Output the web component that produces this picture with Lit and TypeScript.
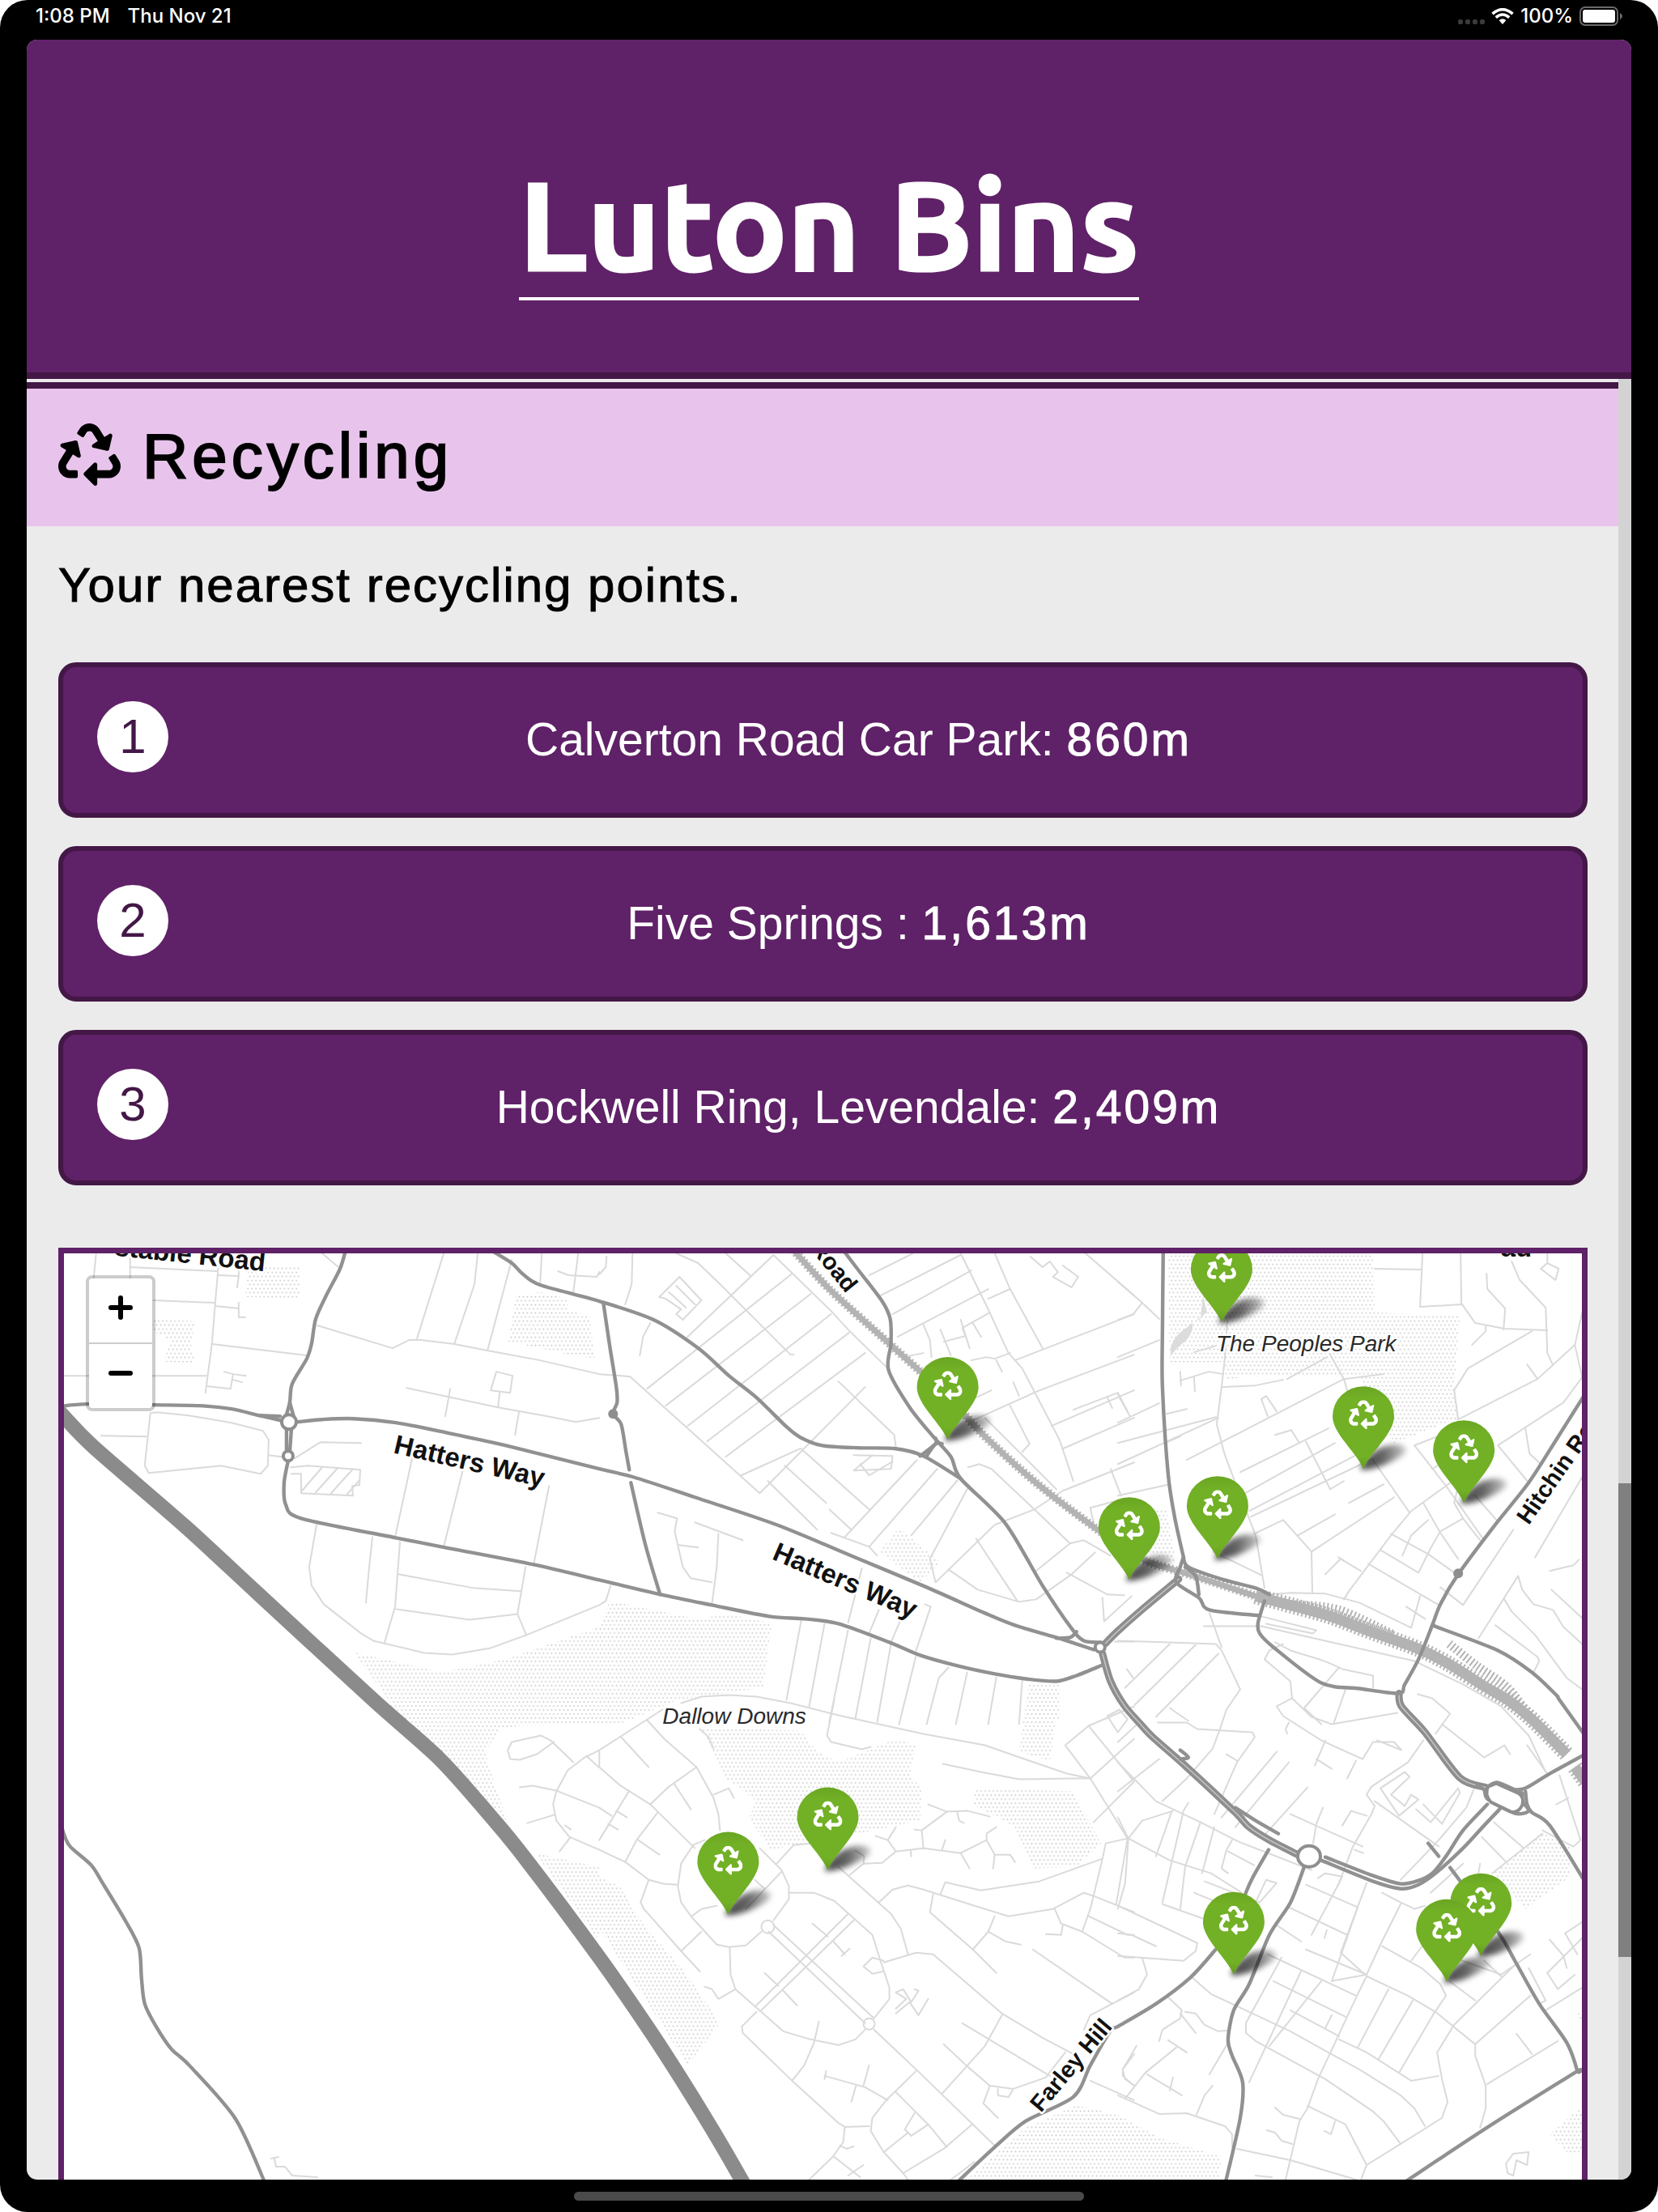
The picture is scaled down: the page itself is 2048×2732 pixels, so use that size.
import { LitElement, html, svg, css } from "lit";
import { customElement, property } from "lit/decorators.js";

const RECYCLE =
  "M184.561 261.903c3.232 13.997-12.123 24.635-24.068 17.168l-40.736-25.455-50.867 81.402C55.606 356.273 70.96 384 96.012 384H148c6.627 0 12 5.373 12 12v40c0 6.627-5.373 12-12 12H96.115c-75.334 0-121.302-83.048-81.408-146.88l50.822-81.388-40.725-25.448c-12.081-7.547-8.966-25.961 4.879-29.158l110.237-25.45c8.611-1.988 17.201 3.381 19.189 11.99l25.452 110.237zm98.561-182.915l41.289 66.076-40.74 25.457c-12.051 7.528-9 25.953 4.879 29.158l110.237 25.45c8.672 1.999 17.215-3.438 19.189-11.99l25.45-110.237c3.197-13.844-11.99-24.719-24.068-17.168l-40.687 25.424-41.263-66.082c-37.521-60.033-125.209-60.171-162.816 0l-17.963 28.766c-3.51 5.62-1.8 13.021 3.82 16.533l33.919 21.195c5.62 3.512 13.024 1.803 16.536-3.817l17.961-28.743c12.712-20.341 41.973-19.676 54.257-.022zM497.288 301.12l-27.515-44.065c-3.511-5.623-10.916-7.334-16.538-3.821l-33.861 21.159c-5.62 3.512-7.33 10.915-3.818 16.536l27.564 44.112c13.257 21.211-2.057 48.96-27.136 48.96H320V336.02c0-14.213-17.242-21.383-27.313-11.313l-80 79.981c-6.249 6.248-6.249 16.379 0 22.627l80 79.989C302.689 517.308 320 510.3 320 495.989V448h95.88c75.274 0 121.335-82.997 81.408-146.88z";

type Point = [number, number];

// Survey sheets: origin and scale of each sheet on the map canvas.
const SHEETS: Record<string, [number, number, number, number]> = {
  a: [60, 1530, 0.4337, 0.3827],
  b: [740, 1530, 0.4209, 0.3827],
  c: [1380, 1530, 0.426, 0.3827],
  d: [0, 2100, 0.4719, 0.4031],
  e: [740, 2100, 0.4209, 0.4031],
  f: [1380, 2100, 0.426, 0.4031],
};

// "a: x,y x,y b: x,y" - a letter switches the sheet that the following points are on.
function points(line: string): Point[] {
  let sheet = SHEETS.a;
  const out: Point[] = [];
  for (const token of line.trim().split(/\s+/)) {
    if (token.endsWith(":")) {
      sheet = SHEETS[token[0]];
      continue;
    }
    const [x, y] = token.split(",").map(Number);
    out.push([
      Math.round(sheet[0] + x * sheet[2]),
      Math.round(sheet[1] + y * sheet[3]),
    ]);
  }
  return out;
}

const straight = (line: string) =>
  "M" + points(line).map((p) => p.join(" ")).join("L");

function smooth(line: string): string {
  const p = points(line);
  let d = `M${p[0][0]} ${p[0][1]}`;
  for (let i = 0; i < p.length - 1; i++) {
    const a = p[i - 1] ?? p[i];
    const b = p[i];
    const c = p[i + 1];
    const e = p[i + 2] ?? c;
    const k = 7;
    d += `C${b[0] + (c[0] - a[0]) / k} ${b[1] + (c[1] - a[1]) / k} ${c[0] - (e[0] - b[0]) / k} ${c[1] - (e[1] - b[1]) / k} ${c[0]} ${c[1]}`;
  }
  return d;
}

const MOTORWAY =
  "a: 20,545 44,575 130,675 390,930 600,1150 d: 976,0 1150,182 1275,345 1366,475 e: 0,790 160,1030 300,1260 420,1475 450,1540";

const MAJOR = [
  "a: 30,543 110,535 300,537 430,540 520,552 600,572 660,588",
  "a: 600,572 660,575",
  "a: 710,592 780,586 870,582 990,595 1130,628 1300,668 b: 0,744 100,770 280,835 520,925 760,1035 960,1125 1130,1210 1220,1250 1340,1288 1450,1328",
  "b: 1340,1290 1380,1288 1400,1270",
  "a: 846,40 830,100 790,185 760,260 750,340 735,390 695,470 687,530 676,578",
  "a: 687,530 698,578",
  "a: 678,616 678,690",
  "a: 692,616 688,690",
  "a: 682,718 672,790 675,860 720,905 990,967 1130,998 1380,1052 b: 0,1102 180,1150 330,1185 500,1220 600,1227 700,1245 850,1305 940,1345 1050,1380 1160,1405 1250,1422 1340,1430 1400,1412 1475,1378",
  "a: 1260,40 1320,80 1350,115 1400,152 b: 0,205 160,265 290,355 380,445 460,515 550,610 590,643 650,670 760,676 870,680 950,702 1060,775",
  "b: 12,210 30,350 50,480 52,530 40,568 65,600 78,690 87,748",
  "b: 92,790 135,990 178,1150",
  "b: 715,40 760,105 830,205 852,260 855,340 847,425 910,545 980,640 1030,705 1060,775 1190,920 1300,1120 1385,1260 1420,1298 1470,1305",
  "b: 940,702 985,665 985,645",
  "b: 960,702 985,665 1005,665",
  "c: 132,30 130,300 128,480 145,760 165,900 190,1030",
  "c: 190,1030 180,1060 170,1110 235,1160 265,1200 410,1218",
  "c: 195,1060 225,1090 235,1150",
  "c: 190,1030 205,1062 300,1100 400,1130 440,1150",
  "c: 425,1170 405,1240 410,1275 450,1320 590,1435 700,1452 815,1468 830,1440 870,1360 910,1250 935,1180 985,1085 1090,930 1190,790 1270,650 1350,510",
  "c: 910,1250 1100,1330 1200,1400 1270,1475 f: 1280,0 1350,105",
  "f: 1070,270 1075,262 1100,252 1150,275 1172,285 1172,310 1190,340 1150,348 1072,305 1062,275 1040,262",
  "f: 1140,275 1180,270 1250,225 1350,168",
  "f: 1180,280 1185,320 1200,345 1250,385 1350,550",
  "f: 1070,320 1000,400 950,480 910,530 870,552 820,562 740,538 600,482",
  "f: 1110,330 1060,385 1000,455 920,530 870,565 820,578 740,555 590,492",
  "f: 340,330 400,370 465,410",
  "f: 180,155 205,175 180,182",
  "f: 437,460 390,545 370,590 330,700 280,770 210,850 110,930 0,1000 e: 1500,1012 1440,1120 1390,1215 1250,1290 1160,1370 1050,1475",
  "f: 540,510 500,620 440,720 380,870 335,950 320,1040 330,1090 362,1170 355,1280 313,1475",
  "f: 898,440 930,480",
  "f: 963,513 1100,710 1150,800 1220,930 1300,1050 1330,1135 1325,1140 1080,1302 830,1475",
  "d: 160,380 167,410 185,450 240,505 270,560 330,680 365,760 370,850 380,930 410,1000 450,1070 495,1120 617,1282 692,1475",
];

const DUAL = [
  "c: 175,1100 80,1190 0,1268 b: 1482,1308",
  "b: 1475,1340 1500,1430 1540,1508 f: 65,74 100,115 200,205 340,345 380,390 440,430 520,475",
  "c: 815,1468 822,1510 f: 890,100 990,238 1065,268",
];

const RAIL = [
  "b: 560,30 680,170 860,350 1020,510 1130,640 1280,790 1460,940 1560,1010 c: 90,1045 220,1090 400,1155",
];
const RAIL_WIDE = [
  "c: 400,1155 600,1215 720,1265 870,1325 960,1375 1060,1445 f: 1130,0 1200,60 1300,165",
  "f: 1325,205 1355,250",
];
const RAIL_YARD = [
  "c: 960,1310 1040,1380 1130,1450 f: 1200,60",
  "c: 500,1180 640,1200 800,1280",
];

const MINOR = [
  // north west
  "a: 135,50 130,130", "a: 232,50 232,130", "a: 232,93 480,108", "a: 485,90 475,210 465,340 455,440 447,500",
  "a: 483,120 542,123 537,160", "a: 542,90 542,123", "a: 300,200 475,210", "a: 475,220 542,227 542,257 560,257", "a: 542,210 542,230",
  "a: 465,343 735,378", "a: 44,443 450,445", "a: 455,478 518,485 525,440 500,432", "a: 525,438 562,444", "a: 525,458 550,464",
  "a: 150,638 278,640", "a: 290,565 275,735 285,757 490,735 605,760 625,735 627,650 610,622 520,595 400,572 310,562 290,565",
  "a: 627,700 665,706", "a: 700,712 775,658 890,661", "a: 780,50 825,95",
  "a: 690,740 740,735 888,747 886,797 865,800 866,830 720,824 720,760 692,760",
  "a: 722,815 780,740", "a: 760,820 822,742", "a: 805,824 868,745", "a: 850,826 885,780",
  "a: 765,282 980,356 1025,328 1060,328 1155,343 1250,363 1400,395 1568,440 b: 0,440 90,447 470,822 780,480",
  "a: 1125,50 1050,325", "a: 1223,50 1213,150 1155,343", "a: 1318,70 1250,363", "a: 1405,50 1400,150", "a: 1507,50 1495,175", "a: 1450,108 1480,120 1560,125 1568,110",
  "a: 1018,484 1140,513 1280,545 1420,575 1500,592 1568,580", "a: 1143,487 1130,575", "a: 1275,432 1322,445 1315,500 1260,492 1275,432", "a: 1285,500 1280,545", "a: 1340,560 1327,635",
  "a: 1035,712 988,965", "a: 1180,745 1125,995", "a: 1425,800 1382,1052",
  "a: 763,925 743,1060 750,1120 785,1180 890,1275 925,1298 1070,1337 1150,1342 1260,1322 1360,1280 1568,1185 b: 20,1170 33,1120",
  "a: 923,965 912,1060 905,1175", "a: 1000,980 988,1190 957,1305", "a: 996,1085 1210,1130 1345,1140", "a: 990,1198 1200,1232 1335,1213", "a: 1357,1060 1335,1213 1360,1280",
  // north centre
  "b: 22,60 20,95 0,118", "b: 98,50 95,150 75,215", "b: 150,275 128,320 118,380",
  "b: 225,50 290,80 350,145 560,375", "b: 370,50 445,122", "b: 510,55 260,320", "b: 510,55 680,235 735,300 845,420",
  "b: 565,115 140,485", "b: 620,180 195,540", "b: 680,245 258,605", "b: 732,305 315,655", "b: 780,370 370,705", "b: 560,375 570,375", "b: 590,680 415,765",
  "b: 700,462 865,635 870,675", "b: 495,785 640,940", "b: 545,735 665,855", "b: 675,875 740,940", "b: 592,680 790,875",
  "b: 932,715 720,965", "b: 990,745 790,995", "b: 1050,780 915,960", "b: 1078,810 970,1035 985,1110 1160,925 1275,875 1360,815 1568,725",
  "b: 680,952 790,995 815,1025", "b: 1080,740 1115,728 1150,745 1275,875 1380,985 1420,975 1500,1025", "b: 1025,1070 1110,1135 1230,1172 1280,1165 1385,1085 1455,1015", "b: 1105,970 1225,1170", "b: 1370,1080 1490,1150 1540,1152", "b: 1280,1075 1380,985",
  "b: 172,885 228,905 220,945 245,1060 268,1098 330,1110", "b: 232,990 290,998", "b: 280,918 420,975", "b: 350,955 345,1060 330,1180",
  "b: 770,1065 730,1240", "b: 820,1200 790,1275", "b: 885,1230 855,1305", "b: 955,1180 972,1190 930,1330",
  "b: 592,1235 548,1490", "b: 660,1245 615,1510", "b: 730,1265 675,1560", "b: 795,1290 750,1550", "b: 855,1310 815,1560", "b: 930,1345 880,1568", "b: 1025,1385 995,1420 960,1568", "b: 1078,1400 1045,1568", "b: 1165,1415 1140,1568", "b: 1240,1425 1230,1568",
  "b: 240,1500 300,1480 380,1475 460,1480 560,1500 700,1540 e: 700,48 950,103 1130,140 1220,170 1370,225 1440,240",
  "b: 175,190 235,125 300,200 245,265 225,245 240,230 195,195 175,190", "b: 205,175 255,225", "b: 225,155 280,215",
  "b: 745,700 860,703 855,745 745,750 800,700", "b: 765,730 790,765 860,720",
  "b: 790,120 920,50", "b: 825,185 1060,55", "b: 860,245 1090,105", "b: 875,318 1140,165", "b: 890,385 950,370", "b: 1060,50 1140,230 1200,370 1240,420 1350,650 1390,785",
  "b: 1160,50 1205,165 1300,355", "b: 1140,195 1205,165", "b: 1220,395 1568,245", "b: 1285,495 1568,375", "b: 1090,590 1285,495", "b: 950,280 970,330 975,385", "b: 1000,295 1030,380", "b: 1060,265 1085,355", "b: 1010,335 1075,315 1065,290 1145,240", "b: 1095,275 1118,320",
  "b: 1090,395 1135,383 1160,390 1205,370", "b: 1165,395 1180,430", "b: 1105,515 1150,490", "b: 1215,465 1230,510", "b: 1205,540 1262,665 1240,690", "b: 1130,580 1340,810",
  "b: 1390,555 1520,500 1550,560", "b: 1490,515 1505,550", "b: 1325,605 1568,490", "b: 1360,680 1568,580", "b: 1500,745 1530,830", "b: 1440,870 1510,850", "b: 1440,870 1450,920",
  "b: 1265,60 1300,95 1320,75 1345,110 1330,125 1385,160 1405,125 1360,90", "b: 1425,50 1568,185", "b: 1475,1160 1480,1235 1560,1155", "b: 1510,1300 1568,1300",
  // north east
  "c: 0,140 70,210 120,262", "c: 0,265 45,245 70,210", "c: 0,385 120,330", "c: 0,505 35,575", "c: 0,595 120,532", "c: 0,660 285,578", "c: 0,730 290,580", "c: 0,830 150,795",
  "c: 140,567 200,552", "c: 135,660 180,640", "c: 180,460 262,432 305,440", "c: 180,432 182,475", "c: 220,450 223,495", "c: 220,368 285,348",
  "c: 318,270 310,390 300,480 287,600 310,700 355,830 400,960 425,1130", "c: 303,480 400,475 480,457", "c: 490,455 605,385", "c: 200,715 655,455 665,490", "c: 615,375 655,455 770,440", "c: 415,520 430,510 460,560", "c: 415,520 435,575",
  "c: 455,635 503,618 525,660", "c: 355,755 610,615", "c: 545,655 615,810 655,785", "c: 365,825 630,660", "c: 380,880 690,700", "c: 385,900 720,720 740,710", "c: 395,955 480,910 560,1010 563,1145", "c: 520,960 630,890", "c: 560,1010 800,835", "c: 668,855 770,795", "c: 740,715 845,885", "c: 860,670 950,800 1060,975", "c: 860,670 925,640", "c: 910,745 950,715",
  "c: 985,800 975,855 1000,905 1050,975", "c: 655,1165 670,1140 790,960 850,880 985,770", "c: 885,855 935,950 985,1035", "c: 790,955 900,1020 975,1080", "c: 760,1005 870,1080 905,1000 935,945 1000,905", "c: 725,1050 930,1185", "c: 825,1025 850,960 900,910", "c: 1035,830 1100,915",
  "c: 440,1150 500,1145 600,1147 700,1175 850,1258 875,1155", "c: 835,1190 890,1228", "c: 935,1125 1000,1185 1145,940", "c: 602,1085 645,1035 705,1075", "c: 638,1030 655,1040", "c: 275,1010 415,1088",
  "c: 745,100 880,102", "c: 882,50 875,222 998,215 1035,275 1120,293 1245,298", "c: 993,50 995,215", "c: 1067,115 1070,165 1123,228 1118,295", "c: 1140,75 1165,135 1240,225 1245,370 1260,410", "c: 1245,50 1245,80 1225,98 1268,135 1278,98 1245,80", "c: 1025,345 1065,300 1065,285",
  "c: 985,585 975,490 1015,420 1200,300", "c: 985,585 1215,455 1325,345 1345,240", "c: 1185,408 1215,455", "c: 1325,345 1345,450 1290,530 1100,670 1190,790", "c: 1180,615 1193,695 1225,730", "c: 1345,770 1210,1030", "c: 1250,1073 1320,1055 1335,1038", "c: 1045,1290 1160,1090 1172,1135 1205,1180 1260,1200 1290,1255 1345,1310", "c: 1255,1135 1345,1225", "c: 1120,1165 1140,1205 1210,1280 1300,1420 1345,1455", "c: 1095,1248 1215,1350 1220,1365 1205,1400",
  "c: 248,1252 415,1252 640,1310 860,1365 1000,1440 1110,1510 f: 1190,110 1240,220", "c: 415,1220 575,1265 565,1275 430,1245", "c: 0,1298 150,1303 285,1308 300,1330 355,1455 315,1520 f: 295,90 275,150 200,240 130,310", "c: 265,1210 300,1320", "c: 455,1305 500,1330 585,1360 620,1375 650,1390 740,1412 740,1450",
  "c: 480,1310 440,1330 425,1360 500,1430 505,1485 460,1510 f: 480,50 590,125 710,180 740,130 800,130 822,155 750,125",
  "c: 640,1385 540,1515 590,1568", "c: 660,1455 625,1568", "c: 505,1485 560,1545 620,1568 810,1530", "c: 150,1310 20,1450", "c: 225,1312 50,1505", "c: 290,1340 110,1545", "c: 25,1390 45,1420", "c: 868,1470 910,1485 962,1535 920,1600", "c: 150,1515 205,1558",
  // east town
  "f: 115,70 200,70 230,90 390,98 397,115 345,190 280,350", "f: 0,130 60,70", "f: 0,190 110,310 240,375 350,435 560,520", "f: 0,280 120,180", "f: 0,360 30,425 150,490 270,530 360,590", "f: 30,425 20,560 0,640", "f: 30,425 70,370 160,340", "f: 155,345 110,480", "f: 205,315 190,340 130,620", "f: 240,375 195,510 180,640", "f: 280,390 245,530", "f: 315,165 345,185", "f: 460,160 300,360", "f: 495,190 340,390", "f: 550,268 420,420",
  "f: 495,70 485,90 490,105", "f: 600,125 570,200", "f: 575,180 620,212", "f: 690,185 665,240", "f: 885,125 840,190 735,265 720,290 745,325 735,350 680,450 640,560 560,720", "f: 745,310 930,450", "f: 650,385 675,340 720,355", "f: 595,330 575,380 565,440", "f: 500,350 710,450", "f: 685,458 712,470",
  "f: 760,270 830,220 845,235 790,290 830,325 850,290 870,305 815,355 760,270", "f: 865,335 905,375 985,270 990,285 940,380 885,320", "f: 940,75 1060,175 1120,140 1135,165", "f: 1030,275 1010,330 930,430 820,550", "f: 1185,140 1245,225", "f: 1270,320 1305,300", "f: 1280,230 1340,430 1320,450 1230,400", "f: 1230,410 1085,530", "f: 1055,420 1125,495", "f: 1090,375 1175,455", "f: 905,590 1000,500", "f: 1045,530 1050,500",
  "f: 580,545 600,530 650,540 635,570", "f: 545,565 695,635", "f: 495,635 665,720", "f: 720,560 645,775 715,840", "f: 460,690 530,740", "f: 545,765 720,840 620,860", "f: 605,705 598,730", "f: 435,780 690,905", "f: 450,860 660,970", "f: 500,950 640,1030", "f: 475,790 370,990 370,1020 400,1045", "f: 530,830 380,1170", "f: 590,860 440,1060", "f: 620,965 600,1005", "f: 720,845 695,900 580,1160 550,1250 525,1290 485,1468", "f: 695,635 620,860", "f: 820,625 760,750 720,840", "f: 765,590 820,620 860,640 890,630",
  "f: 765,755 880,820 935,870 950,905 915,960", "f: 720,845 840,905 920,955 1035,1055", "f: 785,885 695,1065", "f: 855,920 755,1100", "f: 915,960 815,1140", "f: 900,730 850,800", "f: 935,775 1110,840 1195,780", "f: 1150,810 975,995 925,1080 940,1160 955,1230 940,1280 820,1360 720,1425 705,1468", "f: 1195,905 1035,1055 1035,1090 1065,1180 1065,1250 1050,1310", "f: 1275,1045 1070,1175", "f: 1155,1022 1200,1085", "f: 1345,880 1240,950", "f: 960,860 1035,920", "f: 1060,800 1110,845",
  "f: 215,850 270,900 340,935 500,1015 600,1075 700,1130 820,1210 860,1250 890,1305", "f: 400,1045 600,1160 740,1260 770,1290 820,1360", "f: 640,1040 720,1080 850,1165 930,1152", "f: 345,1375 500,1410 690,1468", "f: 550,1242 660,1300 720,1425", "f: 455,1248 480,1270 525,1282", "f: 432,1318 455,1325 475,1350 505,1360", "f: 598,1320 618,1330 628,1290", "f: 400,1455 445,1460",
  "f: 0,1210 120,1268 200,1265 310,1305 330,1330 330,1370", "f: 145,910 185,950 180,975 130,1010 120,1045", "f: 180,960 200,985 225,1020", "f: 195,955 225,960 250,995 290,1015 320,1012", "f: 55,1060 15,1130 20,1160 45,1178", "f: 85,1145 185,1210", "f: 20,1220 80,1140 170,1065", "f: 145,1042 200,1078", "f: 160,1155 150,1195", "f: 320,1050 265,1145", "f: 228,1270 250,1210 275,1180", "f: 0,630 100,680 230,745 225,770 190,800 0,785", "f: 0,715 40,720 110,755", "f: 70,790 85,840 60,885 0,920", "f: 250,555 410,620", "f: 220,590 380,660", "f: 130,625 300,690", "f: 410,620 460,560 430,550 400,620",
  "f: 330,430 315,460 300,515 320,530", "f: 320,465 395,505", "f: 1250,735 1290,785 1300,820", "f: 1190,820 1240,920 1220,930", "f: 1245,835 1345,730", "f: 1245,835 1275,885 1325,840", "f: 1295,715 1345,680", "f: 1295,715 1330,780", "f: 1125,1420 1145,1390 1190,1385 1185,1425 1155,1410 1145,1455 1130,1450 1125,1420",
  // south centre
  "e: 185,30 0,155 0,205 60,260 150,320 280,455", "e: 65,115 145,205", "e: 140,62 190,120 285,205 335,300 350,350 355,400", "e: 285,205 205,265 150,320", "e: 218,255 268,335", "e: 335,290 380,270 395,300", "e: 88,278 0,430", "e: 170,345 110,430 75,495", "e: 115,430 175,475", "e: 0,460 75,495 145,550 190,563 230,565", "e: 50,340 80,360", "e: 25,380 55,398", "e: 0,330 35,355", "e: 295,90 320,115 335,150",
  "e: 145,550 122,620 130,640 240,770 295,832", "e: 240,770 300,710", "e: 310,430 275,445 240,500 230,570 240,620 270,665 345,750 380,757 430,752 475,710", "e: 470,455 535,520 557,570 555,610 510,675", "e: 520,500 570,445 620,438", "e: 535,525 430,640", "e: 455,550 485,578", "e: 270,662 300,640 345,630",
  "e: 557,590 630,590 690,615 800,720 825,800 850,880 850,915 805,975", "e: 510,690 805,975", "e: 497,710 780,990", "e: 745,675 475,950", "e: 730,655 462,935", "e: 625,685 670,725", "e: 685,738 720,778", "e: 710,785 735,762", "e: 485,835 525,875", "e: 540,890 580,935", "e: 383,757 385,840 400,885 540,1015 620,1040 700,1057 750,1040 780,1010", "e: 310,878 330,885 350,915 400,885", "e: 460,955 418,1000 420,1020 565,1165 700,1295 720,1308 790,1305", "e: 645,985 630,1050 600,1120 565,1165", "e: 835,800 800,788 775,815 800,838 835,830", "e: 835,805 930,775 980,778 1180,960 1300,1035 1390,1085", "e: 905,780 885,700 855,655 700,510", "e: 735,535 775,500 830,498 870,465 950,455 1060,468 1135,428 1160,475 1205,475 1218,495", "e: 775,500 778,480 750,462", "e: 820,620 860,580 905,567 950,580 1100,630 1200,663 1330,640 1420,590 1450,600 1568,650", "e: 1000,595 1015,558 1120,582 1290,555 1475,485",
  "e: 870,465 845,430 870,390", "e: 845,430 810,418", "e: 950,455 945,400 1020,342 965,320", "e: 1020,342 1080,340 1145,358", "e: 1050,345 1055,370 1070,378", "e: 1015,430 1005,460", "e: 1060,468 1085,515", "e: 1135,428 1135,410 1165,390", "e: 1160,475 1155,515", "e: 912,460 915,480", "e: 945,400 925,397",
  "e: 690,0 668,110 680,130 770,152 795,145", "e: 1008,197 1120,222 1230,243 1380,240 1440,240 1568,120", "e: 1435,80 1365,140 1440,240 1550,425 1485,440 1475,485 1440,640 1415,710", "e: 1568,20 1435,80 1568,250 1450,375", "e: 1550,425 1515,625", "e: 1335,640 1355,685 1415,710 1540,790 1568,788", "e: 1360,690 1355,720 1310,718", "e: 1435,662 1550,720 1568,720", "e: 980,595 970,650 1095,765 1165,835", "e: 1160,663 1140,710 1095,765", "e: 1140,710 1190,740 1235,748",
  "e: 1270,765 1505,930 1568,895", "e: 1505,930 1440,965 1420,1010", "e: 805,1010 930,1130 1160,1365", "e: 1180,965 1130,1060 1005,1205", "e: 1065,990 1320,1150", "e: 1010,1055 1080,1125 1145,1180 1215,1190 1310,1155 1365,1080", "e: 1145,1180 1125,1235 1170,1280", "e: 1168,1190 1170,1210 1200,1215 1212,1195",
  "e: 930,1135 840,1225 800,1280 795,1320 835,1385 890,1450", "e: 660,1150 780,1185 845,1225", "e: 665,1135 660,1160", "e: 792,1120 775,1180", "e: 752,1180 738,1230", "e: 870,1200 965,1300 1020,1370", "e: 965,1300 915,1335 895,1315 925,1265", "e: 835,1385 905,1325", "e: 1095,1298 1010,1375 890,1450 905,1468", "e: 720,1308 715,1355 685,1400 615,1468", "e: 705,1365 725,1375 745,1368", "e: 690,1400 765,1460", "e: 775,1425 730,1455", "e: 1030,1468 1100,1415",
  "e: 870,945 900,915 870,895 890,885 915,925 935,890 925,885", "e: 870,960 910,925 935,965 965,915", "e: 1440,1165 1568,1225", "e: 1568,1085 1535,1130 1535,1150 1568,1180", "e: 1490,50 1525,30 1550,60 1520,100 1490,50",
  // south west
  "d: 1500,190 1440,125 1415,108 1340,130 1328,155 1335,180 1360,183 1405,165 1450,128", "d: 1568,155 1530,175 1485,215 1455,280 1447,320 1455,370 1490,420 1568,460", "d: 1360,268 1395,262 1455,278 1568,330", "d: 1380,378 1450,352", "d: 1465,465 1492,422", "d: 1480,385 1495,398", "d: 1535,172 1565,205", "d: 710,1405 730,1400", "d: 718,1405 722,1430 745,1428 765,1455 830,1460",
];

const PARKS = [
  "a: 570,95 715,95 715,195 560,190",
  "a: 298,260 420,270 405,340 418,405 330,400 345,330 298,300",
  "a: 1330,185 1400,175 1475,195 1480,235 1540,250 1555,390 1460,370 1310,335",
  "a: 870,1335 1120,1400 1300,1360 1568,1255 b: 30,1170 300,1230 360,1210 505,1240 480,1450 230,1490 60,1568 d: 1360,80 1310,90 1270,160 1300,280 1335,385 1200,210 1010,0 a: 1020,1568",
  "b: 880,935 1000,1045 940,1110 820,1010",
  "b: 1260,1440 1350,1440 1350,1568 e: 1340,50 1320,185 1230,160",
  "c: 145,50 740,50 745,240 990,250 975,480 990,580 800,660 700,450 400,440 310,460 310,400 150,410",
  "c: 60,860 140,880 170,1050 60,1000",
  "e: 300,85 590,95 640,160 700,190 870,120 930,140 910,230 945,270 940,370 760,410 500,460 440,360 460,310 370,240",
  "e: 1105,270 1390,280 1470,440 1400,510 1270,515 1220,390 1095,320",
  "e: 0,540 60,570 130,690 250,830 355,990 260,1120 150,940 0,700",
  "e: 1400,1240 1520,1270 f: 120,1340 300,1400 290,1475 e: 1070,1475 1250,1310",
  "f: 1230,405 1310,450 1310,540 1180,640 1090,530",
  "f: 1330,1255 1350,1250 1350,1390 1300,1385 1250,1330",
  "d: 1400,470 1568,510 1568,740",
  "f: 1325,960 1350,960 1350,1010",
];

const MARKERS: Point[] = [
  [1508, 1634],
  [1170, 1779],
  [1683, 1815],
  [1807, 1857],
  [1503, 1926],
  [1394, 1952],
  [1022, 2310],
  [899, 2365],
  [1828, 2416],
  [1523, 2439],
  [1786, 2448],
];

@customElement("recycle-map")
export class RecycleMap extends LitElement {
  static styles = css`
    :host {
      display: block;
      position: relative;
      box-sizing: border-box;
      overflow: hidden;
      border: 7px solid #5f2167;
      border-bottom: 0;
      background: #fff;
    }
    .canvas {
      position: absolute;
      inset: 0;
      width: 100%;
      height: 100%;
    }
    .line {
      fill: none;
      stroke-linejoin: round;
      stroke-linecap: round;
    }
    .minor {
      stroke: #dadada;
      stroke-width: 2;
    }
    .major {
      stroke: #919191;
      stroke-width: 4.4;
    }
    .dual {
      stroke: #8e8e8e;
      stroke-width: 9;
    }
    .dual-gap {
      stroke: #c8c8c8;
      stroke-width: 1.4;
    }
    .motorway {
      stroke: #8b8b8b;
      stroke-width: 18;
    }
    .rail {
      stroke: #b3b3b3;
      stroke-width: 7;
      stroke-linecap: butt;
    }
    .ties {
      stroke: #b3b3b3;
      stroke-width: 11;
      stroke-dasharray: 2 3;
      stroke-linecap: butt;
    }
    .rail-wide {
      stroke-width: 13;
    }
    .ties-wide {
      stroke-width: 20;
    }
    .junction {
      fill: #fff;
      stroke: #8e8e8e;
      stroke-width: 4;
    }
    .node {
      fill: #8e8e8e;
    }
    .lake {
      fill: #dcdcdc;
    }
    .street,
    .place {
      font-family: "Liberation Sans", Arial, sans-serif;
      paint-order: stroke;
      stroke: #fff;
      stroke-width: 5;
      stroke-linejoin: round;
    }
    .street {
      font-size: 33px;
      font-weight: 700;
      fill: #111;
    }
    .street-minor {
      font-size: 29px;
    }
    .place {
      font-size: 28px;
      font-style: italic;
      fill: #2a2a2a;
    }
    .zoom {
      position: absolute;
      top: 27px;
      left: 27px;
      display: flex;
      flex-direction: column;
      width: 78px;
      border: 4px solid rgba(0, 0, 0, 0.2);
      border-radius: 8px;
      background: #fff;
      background-clip: padding-box;
    }
    .zoom-button {
      display: flex;
      align-items: center;
      justify-content: center;
      box-sizing: border-box;
      height: 79px;
      padding: 0 0 8px;
      border: 0;
      background: none;
    }
    .zoom-button + .zoom-button {
      height: 81px;
      border-top: 2px solid #ccc;
    }
    .zoom-glyph {
      width: 30px;
      height: 30px;
      stroke: #000;
      stroke-width: 6;
      stroke-linecap: round;
    }
  `;

  render() {
    return html`
      <svg
        class="canvas"
        viewBox="79 1549 1874 1143"
        preserveAspectRatio="xMidYMin slice"
        role="img"
        aria-label="Map of recycling points"
      >
        <defs>
          <pattern id="dots" width="5" height="10" patternUnits="userSpaceOnUse">
            <circle cx="1.25" cy="2.5" r="0.9" fill="#c2c2c2"></circle>
            <circle cx="3.75" cy="7.5" r="0.9" fill="#c2c2c2"></circle>
          </pattern>
          <linearGradient id="pin" x1="0" y1="0" x2="0" y2="1">
            <stop offset="0" stop-color="#6aa622"></stop>
            <stop offset="0.15" stop-color="#72b026"></stop>
            <stop offset="0.85" stop-color="#72b026"></stop>
            <stop offset="1" stop-color="#649b20"></stop>
          </linearGradient>
          <linearGradient id="shade" x1="0" y1="0" x2="1" y2="0">
            <stop offset="0" stop-color="#000" stop-opacity="0.75"></stop>
            <stop offset="0.5" stop-color="#000" stop-opacity="0.6"></stop>
            <stop offset="1" stop-color="#000" stop-opacity="0.2"></stop>
          </linearGradient>
          <filter id="soft" x="-30%" y="-60%" width="160%" height="220%">
            <feGaussianBlur stdDeviation="3.5"></feGaussianBlur>
          </filter>
        </defs>
        ${PARKS.map((p) => svg`<path d=${straight(p) + "Z"} fill="url(#dots)"></path>`)}
        <path class="lake" d="M1485 1601L1482 1630Q1474 1632 1466 1640Q1447 1652 1445 1668L1445 1676Q1452 1666 1464 1657Q1474 1645 1472 1635L1490 1622Z"></path>
        ${MINOR.map((p) => svg`<path class="line minor" d=${straight(p)}></path>`)}
        ${RAIL.map((p) => svg`<path class="line rail" d=${smooth(p)}></path><path class="line ties" d=${smooth(p)}></path>`)}
        ${RAIL_WIDE.map((p) => svg`<path class="line rail rail-wide" d=${smooth(p)}></path><path class="line ties ties-wide" d=${smooth(p)}></path>`)}
        ${RAIL_YARD.map((p) => svg`<path class="line ties" d=${smooth(p)}></path>`)}
        <path class="line motorway" d=${smooth(MOTORWAY)}></path>
        ${DUAL.map((p) => svg`<path class="line dual" d=${smooth(p)}></path><path class="line dual-gap" d=${smooth(p)}></path>`)}
        ${MAJOR.map((p) => svg`<path class="line major" d=${smooth(p)}></path>`)}
        <circle class="junction" cx="357" cy="1757" r="9"></circle>
        <circle class="junction" cx="356" cy="1799" r="6"></circle>
        <circle class="junction" cx="1358" cy="2035" r="6"></circle>
        <ellipse class="junction" cx="1616" cy="2293" rx="14" ry="13"></ellipse>
        <path class="junction" d="M1837 2207L1847 2203L1874 2215Q1882 2220 1879 2230Q1874 2240 1865 2238L1840 2226Q1832 2216 1837 2207Z"></path>
        <circle class="node" cx="757" cy="1747" r="6"></circle>
        <circle class="node" cx="1800" cy="1944" r="6"></circle>
        <circle class="line minor" cx="948" cy="2380" r="8"></circle>
        <circle class="line minor" cx="1073" cy="2500" r="7"></circle>

        <text class="street" text-anchor="end" transform="translate(327 1571) rotate(6)">stable Road</text>
        <text class="street" transform="translate(485 1795) rotate(13)">Hatters Way</text>
        <text class="street" transform="translate(952 1926) rotate(23)">Hatters Way</text>
        <text class="street street-minor" text-anchor="end" transform="translate(1045 1599) rotate(51)">Road</text>
        <text class="street street-minor" transform="translate(1887 1885) rotate(-55)">Hitchin Road</text>
        <text class="street street-minor" transform="translate(1285 2610) rotate(-50)">Farley Hill</text>
        <text class="street" text-anchor="end" x="1891" y="1553">ad</text>
        <text class="place" x="1501" y="1670">The Peoples Park</text>
        <text class="place" x="818" y="2129">Dallow Downs</text>

        ${MARKERS.map(
          ([x, y]) => svg`
            <g transform="translate(${x} ${y})">
              <path d="M-4 1C2 -16 20 -30 40 -30C56 -30 56 -20 44 -14C30 -6 12 2 -4 1Z" fill="url(#shade)" filter="url(#soft)"></path>
              <path d="M0 0C-9 -21 -38 -44 -38 -65A38 37 0 0 1 38 -65C38 -44 9 -21 0 0Z" fill="url(#pin)"></path>
              <svg x="-18" y="-85" width="36" height="36" viewBox="0 0 512 512"><path d=${RECYCLE} fill="#fff"></path></svg>
            </g>`,
        )}
      </svg>
      <div class="zoom">
        <button class="zoom-button" type="button" aria-label="Zoom in">
          <svg class="zoom-glyph" viewBox="0 0 30 30"><path d="M3 15H27M15 3V27"></path></svg>
        </button>
        <button class="zoom-button" type="button" aria-label="Zoom out">
          <svg class="zoom-glyph" viewBox="0 0 30 30"><path d="M3 15H27"></path></svg>
        </button>
      </div>
    `;
  }
}

@customElement("status-bar")
export class StatusBar extends LitElement {
  static styles = css`
    :host {
      display: flex;
      align-items: center;
      justify-content: space-between;
      height: 49px;
      box-sizing: border-box;
      padding: 0 44px 9px;
      color: #fff;
      font: 500 24px/28px Inter, "Liberation Sans", sans-serif;
    }
    .group {
      display: flex;
      align-items: center;
    }
    .left {
      gap: 22px;
    }
    .right {
      gap: 8px;
    }
    .cell {
      width: 33px;
      height: 6px;
      margin-top: 14px;
    }
    .wifi {
      width: 28px;
      height: 20px;
    }
    .battery {
      width: 53px;
      height: 24px;
    }
  `;

  render() {
    return html`
      <div class="group left"><span>1:08 PM</span><span>Thu Nov 21</span></div>
      <div class="group right">
        <svg class="cell" viewBox="0 0 33 6" fill="#3b3b3b" aria-hidden="true">
          ${[0, 9, 18, 27].map((x) => svg`<rect x=${x} width="6" height="6" rx="2"></rect>`)}
        </svg>
        <svg class="wifi" viewBox="0 0 28 20" aria-hidden="true">
          <g fill="none" stroke="#fff" stroke-width="3.6">
            <path d="M1.5 7.2Q14 -3.8 26.5 7.2"></path>
            <path d="M5.8 11.6Q14 4.4 22.2 11.6"></path>
          </g>
          <path d="M9.6 15Q14 11.6 18.4 15L14 20Z" fill="#fff"></path>
        </svg>
        <span>100%</span>
        <svg class="battery" viewBox="0 0 53 24" aria-hidden="true">
          <rect x="1" y="1" width="46" height="22" rx="6" fill="none" stroke="#6a6a6a" stroke-width="2"></rect>
          <rect x="4" y="4" width="40" height="16" rx="3" fill="#fff"></rect>
          <path d="M50 8Q53 9.500 53 12T50 16Z" fill="#6a6a6a"></path>
        </svg>
      </div>
    `;
  }
}

@customElement("point-row")
export class PointRow extends LitElement {
  @property({ type: Number }) rank = 1;
  @property() name = "";
  @property() distance = "";

  static styles = css`
    :host {
      display: block;
    }
    .row {
      display: flex;
      align-items: center;
      width: 100%;
      height: 192px;
      padding: 0 42px 2px;
      box-sizing: border-box;
      border: 6px solid #431746;
      border-radius: 22px;
      background: #5f2167;
      color: #fff;
      font: 400 57px/80px "Liberation Sans", Arial, sans-serif;
    }
    .badge {
      width: 88px;
      height: 88px;
      margin-bottom: 7px;
      border-radius: 50%;
      background: #fff;
      color: #431746;
      font-size: 60px;
      line-height: 87px;
      text-align: center;
    }
    .label {
      flex: 1;
      text-align: center;
    }
    .distance {
      font-weight: 400;
      letter-spacing: 3px;
      -webkit-text-stroke: 1px currentColor;
    }
  `;

  render() {
    return html`
      <button class="row" type="button">
        <span class="badge">${this.rank}</span>
        <span class="label">${this.name}: <strong class="distance">${this.distance}</strong></span>
      </button>
    `;
  }
}

@customElement("app-root")
export class AppRoot extends LitElement {
  static styles = css`
    :host {
      display: block;
      background: #fff;
    }
    .device {
      display: flex;
      flex-direction: column;
      height: 100vh;
      overflow: hidden;
      border-radius: 34px;
      background: #000;
      font-family: "Liberation Sans", Arial, sans-serif;
    }
    .screen {
      flex: 1;
      min-height: 0;
      display: flex;
      flex-direction: column;
      margin: 0 33px;
      overflow: hidden;
      border-radius: 13px;
      background: #ebebeb;
    }
    .banner {
      display: flex;
      justify-content: center;
      padding: 138px 0 89px;
      border-bottom: 8px solid #431746;
      background: #5f2167;
    }
    .title {
      margin: 0;
      border-bottom: 4px solid #fff;
      color: #fff;
      font: 700 154px/180px Ubuntu, "Open Sans", sans-serif;
      -webkit-text-stroke: 3px currentColor;
    }
    .scroller {
      flex: 1;
      min-height: 0;
      display: flex;
    }
    .page {
      flex: 1;
      min-width: 0;
      display: flex;
      flex-direction: column;
    }
    .track {
      width: 16px;
      display: flex;
      flex-direction: column;
      background: #d3d3d3;
    }
    .before {
      flex: 1364;
    }
    .thumb {
      flex: 585;
      background: #808080;
    }
    .after {
      flex: 275;
    }
    .section-head {
      display: flex;
      align-items: center;
      gap: 27px;
      margin-top: 4px;
      padding: 38px 39px 42px;
      border-top: 8px solid #431746;
      background: #e8c4ec;
    }
    .section-icon {
      width: 77px;
      height: 77px;
      margin-bottom: 3px;
    }
    .section-title {
      margin: 0;
      font-size: 78px;
      font-weight: 400;
      line-height: 90px;
      letter-spacing: 5px;
      -webkit-text-stroke: 2px currentColor;
    }
    .body {
      flex: 1;
      min-height: 0;
      display: flex;
      flex-direction: column;
      padding: 33px 38px 0 39px;
    }
    .lede {
      margin: 0;
      font-size: 60px;
      line-height: 80px;
      letter-spacing: 2px;
      -webkit-text-stroke: 1px currentColor;
    }
    .points {
      display: flex;
      flex-direction: column;
      gap: 35px;
      margin: 55px 0 77px;
      padding: 0;
      list-style: none;
    }
    .map {
      flex: 1;
      min-height: 0;
    }
    .home {
      display: flex;
      justify-content: center;
      padding: 15px 0 14px;
    }
    .home-bar {
      width: 630px;
      max-width: 60%;
      height: 11px;
      border-radius: 6px;
      background: #4b4b4b;
    }
  `;

  private points = [
    { name: "Calverton Road Car Park", distance: "860m" },
    { name: "Five Springs ", distance: "1,613m" },
    { name: "Hockwell Ring, Levendale", distance: "2,409m" },
  ];

  render() {
    return html`
      <div class="device">
        <status-bar></status-bar>
        <div class="screen">
          <header class="banner"><h1 class="title">Luton Bins</h1></header>
          <div class="scroller">
            <main class="page">
              <div class="section-head">
                <svg class="section-icon" viewBox="0 0 512 512" aria-hidden="true"><path d=${RECYCLE}></path></svg>
                <h2 class="section-title">Recycling</h2>
              </div>
              <div class="body">
                <p class="lede">Your nearest recycling points.</p>
                <ol class="points">
                  ${this.points.map(
                    (p, i) => html`<li>
                      <point-row .rank=${i + 1} .name=${p.name} .distance=${p.distance}></point-row>
                    </li>`,
                  )}
                </ol>
                <recycle-map class="map"></recycle-map>
              </div>
            </main>
            <div class="track">
              <div class="before"></div>
              <div class="thumb"></div>
              <div class="after"></div>
            </div>
          </div>
        </div>
        <div class="home"><div class="home-bar"></div></div>
      </div>
    `;
  }
}
